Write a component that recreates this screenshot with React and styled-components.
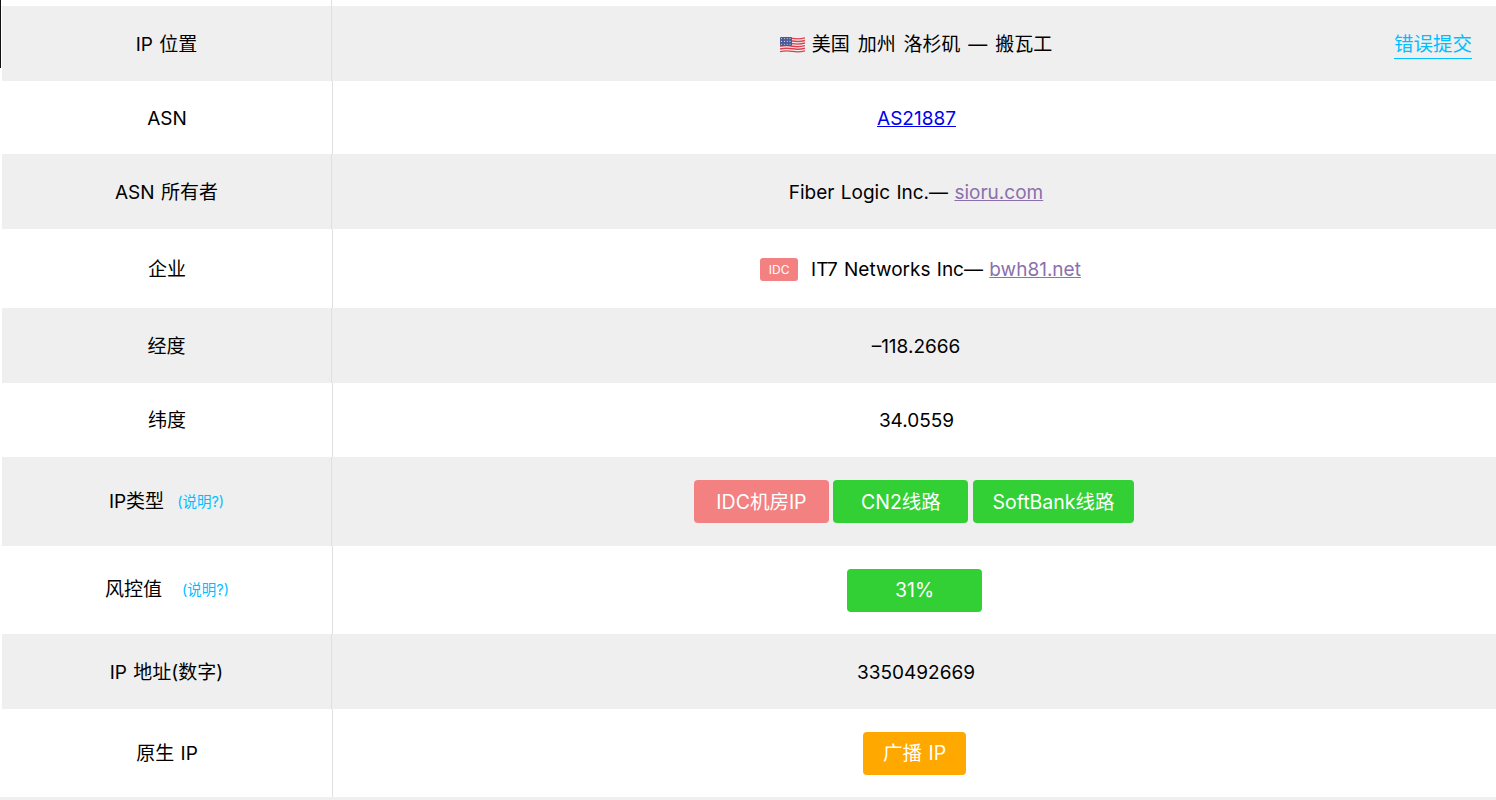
import styled, { createGlobalStyle } from "styled-components";

const GlobalStyle = createGlobalStyle`
    html, body {
        margin: 0;
        padding: 0;
        background: #fff;
        overflow: hidden;
    }

    body {
        font-family: Inter, "Noto Sans CJK SC", sans-serif;
        font-size: 19px;
        line-height: 24px;
        word-spacing: 1px;
        color: #000;
    }
`

const Page = styled.div`
    position: relative;
    width: 1496px;
    height: 800px;
    overflow: hidden;
    padding-left: 2px;
    box-sizing: border-box;
`

const EdgeLine = styled.div`
    position: absolute;
    left: 0;
    top: 0;
    width: 1px;
    height: 68px;
    background-color: #111;
`

const TopStrip = styled.div`
    height: 6px;
`

const TopStripLabel = styled.div`
    width: 329px;
    height: 100%;
    border-right: 1px solid #e0e0e0;
`

const Row = styled.div`
    display: flex;
    height: ${({ $height }) => $height}px;
    background-color: ${({ $striped }) => ($striped ? "#efefef" : "#fff")};
`

const LabelCell = styled.div`
    flex: none;
    box-sizing: content-box;
    width: ${({ $wide }) => ($wide ? 330 : 329)}px;
    padding-top: ${({ $hasNote }) => ($hasNote ? 0 : 2)}px;
    display: flex;
    align-items: center;
    justify-content: center;
    border-right: 1px solid #e0e0e0;
`

const ValueCell = styled.div`
    position: relative;
    flex: 1;
    display: flex;
    align-items: center;
    justify-content: center;
    padding: 2px 0 0 4px;
    white-space: pre-wrap;
`

const FlagIcon = styled.svg`
    width: 25px;
    height: 20px;
    margin-right: 7px;
`

const LocationText = styled.span`
    word-spacing: 2.5px;
`

const ReportLink = styled.a`
    position: absolute;
    right: 24px;
    top: 24px;
    font-size: 19.5px;
    line-height: 28px;
    color: #00bfff;
    text-decoration: none;
    border-bottom: 1px solid #00bfff;
`

const BlueLink = styled.a`
    color: #0000ee;
    text-decoration: underline;
`

const SiteLink = styled.a`
    color: #8a70ad;
    text-decoration: underline;
`

const IdcBadge = styled.span`
    width: 38px;
    height: 23px;
    margin: 0 13px 0 8px;
    display: flex;
    align-items: center;
    justify-content: center;
    border-radius: 3px;
    background-color: #f38181;
    color: #fff;
    font-size: 12px;
`

const ButtonGroup = styled.div`
    display: flex;
    gap: 4.5px;
    margin: 0 4px 2px 0;
`

const Tag = styled.span`
    box-sizing: border-box;
    min-width: ${({ $narrow }) => ($narrow ? "102px" : "135px")};
    height: 43px;
    padding: 0 19.5px;
    display: flex;
    align-items: center;
    justify-content: center;
    border-radius: 4px;
    background-color: ${({ color }) => color};
    color: #fff;
    font-size: 19.5px;
`

const NoteLink = styled.a`
    margin-left: ${({ $gap }) => $gap}px;
    font-size: 14.5px;
    color: #00bfff;
    text-decoration: none;
`

const BottomLine = styled.div`
    height: 3px;
    margin-left: -2px;
    background-color: #efefef;
`

// stripes bow a little, as the emoji flag does
const stripe = (y) => `M0 ${y + 0.6}Q6 ${y - 0.8} 12.5 ${y + 0.4}T25 ${y - 0.2}`

const Flag = () => (
    <FlagIcon viewBox="0 0 25 20" aria-hidden="true">
        <rect y="2" width="25" height="16.5" rx="1" fill="#f1eeee" />
        {[3, 5.6, 8.2, 10.8, 13.4, 16].map((y) => (
            <path key={y} d={stripe(y)} stroke="#d8424f" strokeWidth="1.4" fill="none" />
        ))}
        <rect y="2" width="12" height="9" rx="1" fill="#4b5a96" />
        {[1.6, 4.4, 7.2, 10].map((x) => [3.6, 6.4, 9.2].map((y) => (
            <circle key={`${x}-${y}`} cx={x} cy={y} r="0.55" fill="#d9deef" />
        )))}
    </FlagIcon>
)

const rows = [
    {
        label: "IP 位置",
        height: 75,
        content: (
            <>
                <Flag />
                <LocationText>美国 加州 洛杉矶 — 搬瓦工</LocationText>
                <ReportLink href="#">错误提交</ReportLink>
            </>
        ),
    },
    { label: "ASN", height: 73, content: <BlueLink href="#">AS21887</BlueLink> },
    { label: "ASN 所有者", height: 75, content: <span>Fiber Logic Inc.— <SiteLink href="#">sioru.com</SiteLink></span> },
    { label: "企业", height: 79, content: <><IdcBadge>IDC</IdcBadge><span>IT7 Networks Inc— <SiteLink href="#">bwh81.net</SiteLink></span></> },
    { label: "经度", height: 75, content: "–118.2666" },
    { label: "纬度", height: 74, content: "34.0559" },
    {
        label: "IP类型",
        note: 13,
        height: 89,
        content: (
            <ButtonGroup>
                <Tag color="#f38181">IDC机房IP</Tag>
                <Tag color="#32d034">CN2线路</Tag>
                <Tag color="#32d034">SoftBank线路</Tag>
            </ButtonGroup>
        ),
    },
    { label: "风控值", note: 20, height: 88, content: <ButtonGroup><Tag color="#32d034">31%</Tag></ButtonGroup> },
    { label: "IP 地址(数字)", height: 75, content: "3350492669" },
    { label: "原生 IP", height: 88, content: <ButtonGroup><Tag color="#ffa800" $narrow>广播 IP</Tag></ButtonGroup> },
]

const App = () => {
    return (
        <>
            <GlobalStyle />
            <Page>
                <EdgeLine />
                <TopStrip>
                    <TopStripLabel />
                </TopStrip>

                {rows.map((row, index) => (
                    <Row key={row.label} $height={row.height} $striped={index % 2 === 0}>
                        <LabelCell $wide={index % 2 === 1} $hasNote={Boolean(row.note)}>
                            {row.label}
                            {row.note && <NoteLink href="#" $gap={row.note}>(说明?)</NoteLink>}
                        </LabelCell>
                        <ValueCell>{row.content}</ValueCell>
                    </Row>
                ))}

                <BottomLine />
            </Page>
        </>
    )
}

export default App;
